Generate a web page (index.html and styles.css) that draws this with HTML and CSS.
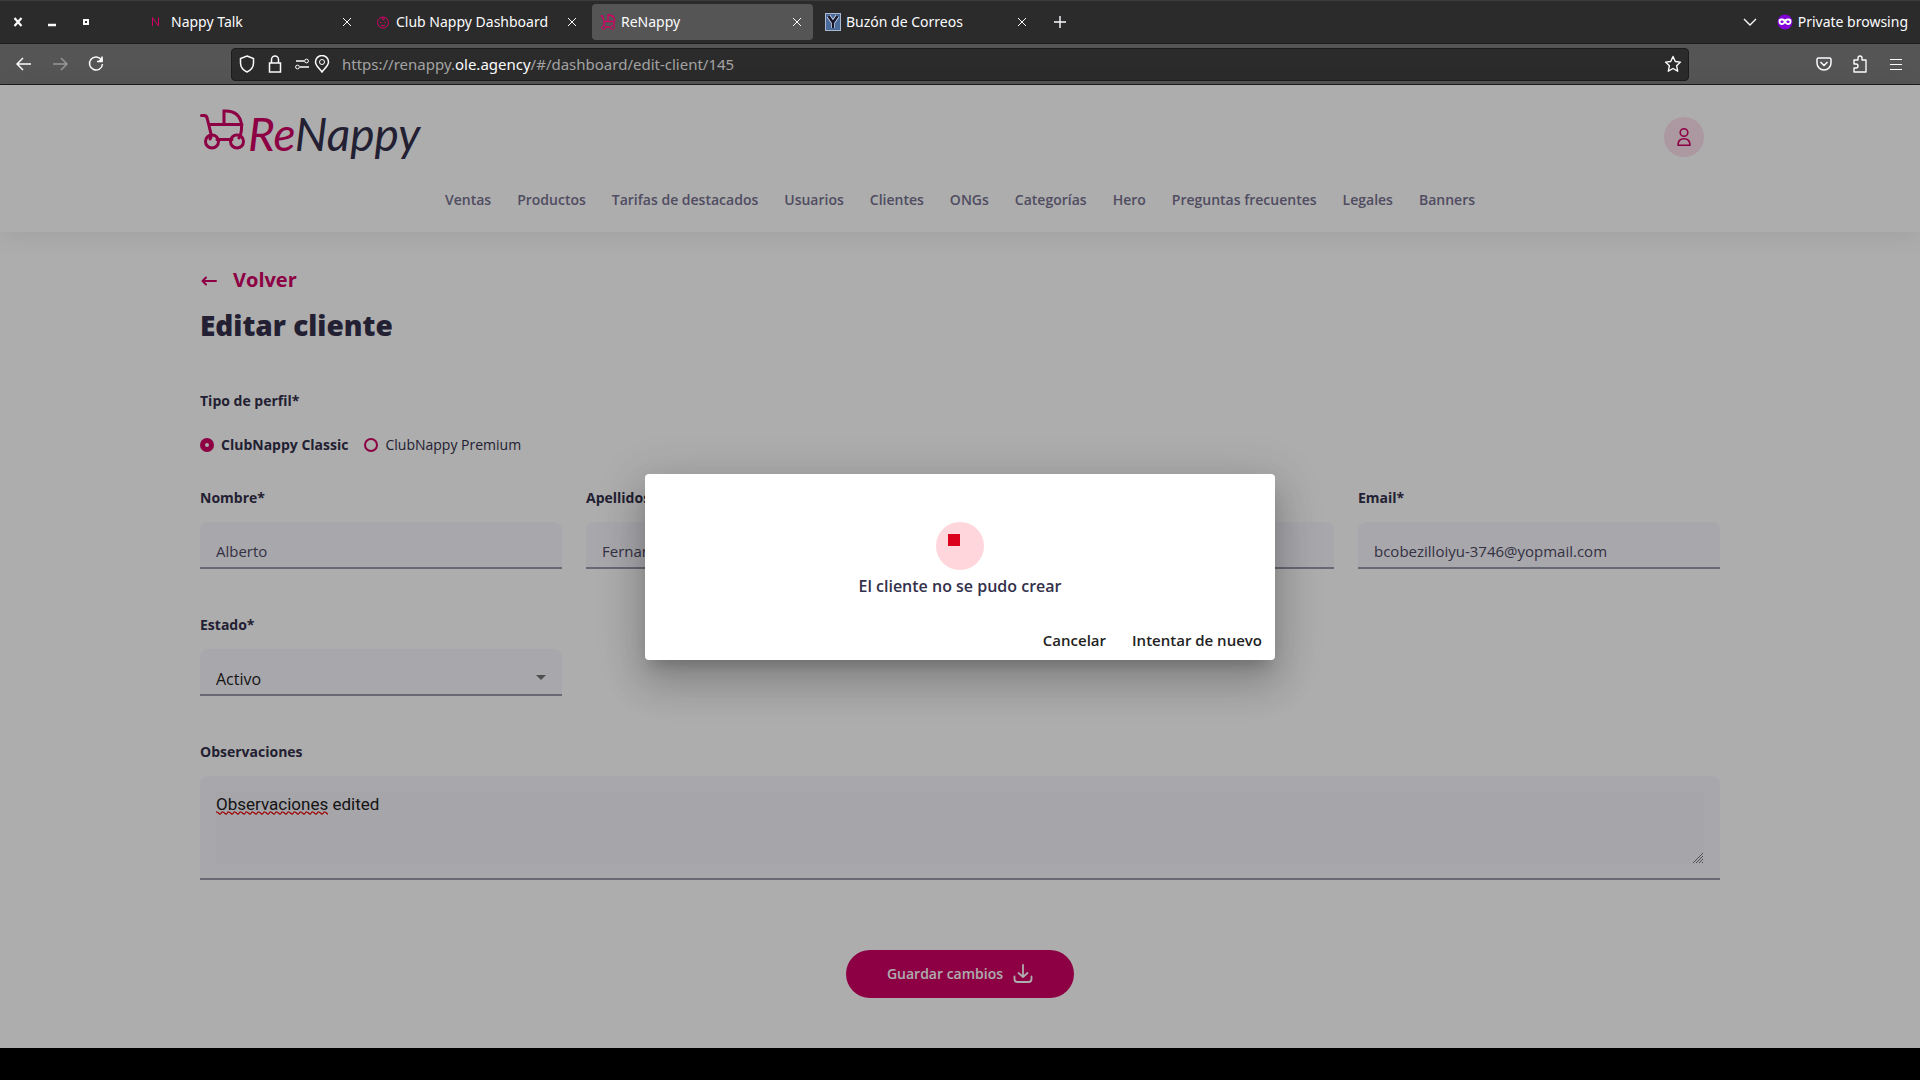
FILE: index.html
```html
<!DOCTYPE html>
<html lang="es">
<head>
    <meta charset="UTF-8">
    <meta name="viewport" content="width=device-width, initial-scale=1.0">
    <title>ReNappy</title>
    <link rel="stylesheet" href="styles.css">
</head>
<body>
    <div class="browser">
        <div class="tab-bar">
            <div class="window-buttons">
                <button class="icon-button" aria-label="Close window"><svg width="10" height="10" viewBox="0 0 10 10"><path d="M1.500 1l7 8M8.500 1l-7 8" stroke-width="2.200"/></svg></button>
                <button class="icon-button" aria-label="Minimize"><svg width="10" height="10" viewBox="0 0 10 10"><path d="M1 8h8" stroke-width="2.500"/></svg></button>
                <button class="icon-button" aria-label="Maximize"><svg width="10" height="10" viewBox="0 0 10 10"><path d="M3 3h4v4H3z" stroke-width="2"/></svg></button>
            </div>
            <div class="tabs">
                <div class="tab">
                    <svg class="favicon pink" width="16" height="16" viewBox="0 0 16 16"><path d="M2.500 12V3.500l6 8.500V3.500"/></svg>
                    <span class="tab-title">Nappy Talk</span>
                    <button class="icon-button" aria-label="Close tab"><svg width="8" height="8" viewBox="0 0 8 8"><path d="M0 0l8 8M8 0L0 8"/></svg></button>
                </div>
                <div class="tab">
                    <svg class="favicon pink" width="16" height="16" viewBox="0 0 16 16"><circle cx="8" cy="8.500" r="5.500"/><path d="M5 8.500h1.500M9.500 8.500H11M6 11q2 1.500 4 0M8 3q-2 2 0 3q2 0 1-2"/></svg>
                    <span class="tab-title">Club Nappy Dashboard</span>
                    <button class="icon-button" aria-label="Close tab"><svg width="8" height="8" viewBox="0 0 8 8"><path d="M0 0l8 8M8 0L0 8"/></svg></button>
                </div>
                <div class="tab active">
                    <svg class="favicon pink" width="16" height="16" viewBox="0 0 16 16"><path d="M.5 2h2L4 7.500V12M4 7.500h10.500M8 7V1q5.500 0 6.500 4v2M14 7v5M5.500 13h5" stroke-width="1.300"/><circle cx="3.500" cy="13.500" r="1.900"/><circle cx="12.500" cy="13.500" r="1.900"/></svg>
                    <span class="tab-title">ReNappy</span>
                    <button class="icon-button" aria-label="Close tab"><svg width="8" height="8" viewBox="0 0 8 8"><path d="M0 0l8 8M8 0L0 8"/></svg></button>
                </div>
                <div class="tab">
                    <svg class="favicon" width="16" height="18" viewBox="0 0 16 18"><rect x=".5" y=".5" width="15" height="17" fill="#4a6a9c" stroke="#a9b8cf"/><path d="M3.500 3l4.500 6.500L12.500 3M8 9v6" stroke="#dfe6f0" stroke-width="4"/><path d="M3.500 3l4.500 6.500L12.500 3M8 9v6" stroke="#15152c" stroke-width="2.500"/></svg>
                    <span class="tab-title">Buzón de Correos</span>
                    <button class="icon-button" aria-label="Close tab"><svg width="8" height="8" viewBox="0 0 8 8"><path d="M0 0l8 8M8 0L0 8"/></svg></button>
                </div>
            </div>
            <button class="icon-button new-tab" aria-label="New tab"><svg width="12" height="12" viewBox="0 0 12 12"><path d="M6 0v12M0 6h12" stroke-width="1.400"/></svg></button>
            <div class="private">
                <button class="icon-button" aria-label="List all tabs"><svg width="14" height="8" viewBox="0 0 14 8"><path d="M1 1l6 6 6-6" stroke-width="1.400"/></svg></button>
                <svg class="mask" width="16" height="16" viewBox="0 0 16 16"><circle cx="8" cy="8" r="7.500" fill="#8000d7"/><path d="M1.500 7q0-3 3.500-2.500 2 .2 3 1 1-.8 3-1 3.500-.5 3.500 2.500 0 4-3.500 4-1.800 0-3-1.700Q6.800 11 5 11 1.500 11 1.500 7z" fill="#fff"/><ellipse cx="5" cy="7.800" rx="1.600" ry="1.200" fill="#8000d7"/><ellipse cx="11" cy="7.800" rx="1.600" ry="1.200" fill="#8000d7"/></svg>
                <span>Private browsing</span>
            </div>
        </div>
        <div class="toolbar">
            <div class="toolbar-side">
                <button class="icon-button" aria-label="Back"><svg width="16" height="16" viewBox="0 0 16 16"><path d="M15 8H1.500M7 2L1 8l6 6" stroke-width="1.500"/></svg></button>
                <button class="icon-button dim" aria-label="Forward"><svg width="16" height="16" viewBox="0 0 16 16"><path d="M1 8h13.500M9 2l6 6-6 6" stroke-width="1.500"/></svg></button>
                <button class="icon-button" aria-label="Reload"><svg width="16" height="16" viewBox="0 0 16 16"><path d="M13.500 4A6.500 6.500 0 1 0 14.500 8M14 .5v5H9" stroke-width="1.500"/><path d="M14.500 1v5h-5z" fill="#fbfbfe" stroke="none"/></svg></button>
            </div>
            <div class="url-bar">
                <svg width="16" height="18" viewBox="0 0 16 18"><path d="M8 1l6.500 2.500V8c0 4-2.500 7-6.500 9C4 15 1.500 12 1.500 8V3.500z" stroke-width="1.500"/></svg>
                <svg width="16" height="18" viewBox="0 0 16 18"><path d="M2.500 8h11v9h-11zM4.500 8V4.500a3.500 3.500 0 0 1 7 0V8" stroke-width="1.500"/></svg>
                <div class="site-icons">
                    <svg width="14" height="12" viewBox="0 0 14 12"><path d="M1 3h8M5 9h9" stroke-width="1.400"/><circle cx="11.500" cy="3" r="1.900"/><circle cx="2.500" cy="9" r="1.900"/></svg>
                    <svg width="16" height="18" viewBox="0 0 16 18"><path d="M8 17C5 13 1.500 10.500 1.500 7a6.500 6.500 0 0 1 13 0c0 3.500-3.500 6-6.500 10z" stroke-width="1.500"/><circle cx="8" cy="7" r="2.500"/></svg>
                </div>
                <span class="url">https://renappy.<b>ole.agency</b>/#/dashboard/edit-client/145</span>
                <button class="icon-button" aria-label="Bookmark"><svg width="18" height="18" viewBox="0 0 18 18"><path d="M9 1.500l2.300 5 5.200.6-3.900 3.600 1.100 5.500L9 13.500l-4.700 2.700 1.100-5.500L1.500 7.100l5.200-.6z" stroke-width="1.400" stroke-linejoin="round"/></svg></button>
            </div>
            <div class="toolbar-side end">
                <button class="icon-button" aria-label="Save to Pocket"><svg width="16" height="16" viewBox="0 0 16 16"><path d="M2.500 2h11q1.500 0 1.500 1.500V7a7 7 0 0 1-14 0V3.500Q1 2 2.500 2zM4.500 6L8 9.500 11.500 6" stroke-width="1.500"/></svg></button>
                <button class="icon-button" aria-label="Extensions"><svg width="16" height="18" viewBox="0 0 16 18"><path d="M2 5h4V3a2 2 0 0 1 4 0v2h4v12H2v-4h2a2 2 0 0 0 0-4H2z" stroke-width="1.400" stroke-linejoin="round"/></svg></button>
                <button class="icon-button" aria-label="Menu"><svg width="14" height="12" viewBox="0 0 14 12"><path d="M1 1.500h12M1 6.500h12M1 11.500h12" stroke-width="1.200"/></svg></button>
            </div>
        </div>
    </div>

    <div class="page">
        <header class="header">
            <div class="container header-top">
                <a class="logo" href="#" aria-label="ReNappy">
                    <svg width="48" height="44" viewBox="0 0 48 44"><path d="M1.500 6.500H4q3 0 3.500 4L11 25q.5 3-1 5M9.500 15.500h32.500M24 15V2q15-1 17.500 13 .5 9-2.500 14M17 30.500h15"/><circle cx="12" cy="32.500" r="6.500"/><circle cx="37" cy="32.500" r="6.500"/></svg>
                    <span class="logo-text"><span class="logo-re">Re</span>Nappy</span>
                </a>
                <button class="avatar" aria-label="Mi cuenta"><svg width="16" height="20" viewBox="0 0 16 20"><circle cx="8" cy="5.500" r="3.800"/><path d="M2 18.200q0-6.500 6-6.500t6 6.500z" stroke-linejoin="round"/></svg></button>
            </div>
            <nav class="nav">
                <a href="#">Ventas</a>
                <a href="#">Productos</a>
                <a href="#">Tarifas de destacados</a>
                <a href="#">Usuarios</a>
                <a href="#">Clientes</a>
                <a href="#">ONGs</a>
                <a href="#">Categorías</a>
                <a href="#">Hero</a>
                <a href="#">Preguntas frecuentes</a>
                <a href="#">Legales</a>
                <a href="#">Banners</a>
            </nav>
        </header>

        <main class="container main">
            <a class="back" href="#"><svg width="18" height="14" viewBox="0 0 18 14"><path d="M16 8H2.500M6 4.500L2.500 8 6 11.500"/></svg>Volver</a>
            <h1>Editar cliente</h1>

            <form class="form">
                <fieldset class="profile">
                    <legend>Tipo de perfil*</legend>
                    <div class="radios">
                        <label class="radio"><input type="radio" name="perfil" checked><span>ClubNappy Classic</span></label>
                        <label class="radio"><input type="radio" name="perfil"><span>ClubNappy Premium</span></label>
                    </div>
                </fieldset>

                <div class="fields">
                    <div class="field">
                        <label for="nombre">Nombre*</label>
                        <input type="text" id="nombre" value="Alberto">
                    </div>
                    <div class="field">
                        <label for="apellidos">Apellidos*</label>
                        <input type="text" id="apellidos" value="Fernandez">
                    </div>
                    <div class="field">
                        <label for="telefono">Teléfono*</label>
                        <input type="tel" id="telefono">
                    </div>
                    <div class="field">
                        <label for="email">Email*</label>
                        <input type="email" id="email" value="bcobezilloiyu-3746@yopmail.com">
                    </div>
                    <div class="field">
                        <label for="estado">Estado*</label>
                        <div class="select">
                            <select id="estado"><option>Activo</option><option>Inactivo</option></select>
                            <svg class="caret" width="10" height="5" viewBox="0 0 10 5"><path d="M0 0h10L5 5z"/></svg>
                        </div>
                    </div>
                </div>

                <div class="field">
                    <label for="observaciones">Observaciones</label>
                    <div class="textarea">
                        <textarea id="observaciones" spellcheck="false">Observaciones edited</textarea>
                        <svg class="misspelled" width="112" height="4"><defs><pattern id="wave" width="6" height="4" patternUnits="userSpaceOnUse"><path d="M0 .8Q1.500.8 3 2.500T6 .8"/></pattern></defs><rect width="112" height="4" fill="url(#wave)"/></svg>
                        <svg class="grip" width="12" height="12" viewBox="0 0 12 12"><path d="M1 11L11 1M4 11l7-7M7 11l4-4M10 11l1-1"/></svg>
                    </div>
                </div>

                <button class="save" type="button">Guardar cambios<svg width="20" height="20" viewBox="0 0 20 20"><path d="M10 1v12M5.500 9l4.500 4 4.500-4M1.500 12.500V15q0 3 3 3h11q3 0 3-3v-2.500"/></svg></button>
            </form>
        </main>

        <div class="overlay">
            <div class="dialog" role="dialog" aria-modal="true" aria-labelledby="dialog-message">
                <div class="dialog-icon"><span></span></div>
                <p id="dialog-message">El cliente no se pudo crear</p>
                <div class="dialog-actions">
                    <button>Cancelar</button>
                    <button>Intentar de nuevo</button>
                </div>
            </div>
        </div>
    </div>
</body>
</html>
```

FILE: styles.css
```css
* {
    box-sizing: border-box;
}

body {
    margin: 0;
    min-height: 100vh;
    padding-bottom: 32px;
    display: flex;
    flex-direction: column;
    background: #000;
    color: #33304b;
    font-family: "Open Sans", sans-serif;
    font-size: 14px;
    line-height: 20px;
}

button, input, select, textarea {
    font: inherit;
    color: inherit;
}

button {
    padding: 0;
    border: none;
    background: none;
    cursor: pointer;
}

a {
    color: inherit;
    text-decoration: none;
}

svg {
    display: block;
    flex: none;
    fill: none;
    stroke: currentColor;
}

/* browser window */
.browser {
    color: #fbfbfe;
    font-family: "Noto Sans", sans-serif;
    font-size: 14px;
}

.tab-bar {
    display: flex;
    align-items: center;
    height: 44px;
    padding-right: 12px;
    background: #2b2b2b;
    border-top: 1px solid #3c3c3c;
    border-bottom: 1px solid #1c1c1c;
}

.icon-button {
    display: flex;
    align-items: center;
    justify-content: center;
    width: 16px;
    height: 24px;
    flex: none;
}

.window-buttons {
    display: flex;
    gap: 18px;
    padding: 0 48px 0 10px;
}

.tabs {
    display: flex;
    gap: 4px;
}

.tab {
    display: flex;
    align-items: center;
    gap: 5px;
    width: 221px;
    height: 36px;
    padding: 0 8px;
    border-radius: 4px;
}

.tab.active {
    background: #555;
}

.tab-title {
    flex: 1;
}

.pink {
    color: #d20065;
}

.new-tab {
    margin-left: 14px;
}

.private {
    display: flex;
    align-items: center;
    gap: 5px;
    margin-left: auto;
}

.private .icon-button {
    margin-right: 14px;
}

.mask {
    stroke: none;
}

.toolbar {
    display: flex;
    align-items: center;
    height: 41px;
    background: #555;
    border-bottom: 1px solid #1c1c1c;
}

.toolbar-side {
    display: flex;
    gap: 20px;
    width: 231px;
    padding: 0 16px;
}

.toolbar-side.end {
    justify-content: flex-end;
}

.dim {
    opacity: .4;
}

.url-bar {
    display: flex;
    align-items: center;
    gap: 12px;
    flex: 1;
    height: 33px;
    padding: 0 7px;
    background: #2b2b2b;
    border: 1px solid #1c1c1c;
    border-radius: 4px;
}

.site-icons {
    display: flex;
    align-items: center;
    gap: 5px;
}

.url {
    flex: 1;
    color: #a3a3a3;
    font-size: 15px;
}

.url b {
    color: #fbfbfe;
    font-weight: normal;
}

/* page */
.page {
    position: relative;
    flex: 1;
    background: #fff;
}

.container {
    width: 100%;
    max-width: 1568px;
    margin: 0 auto;
    padding: 0 24px;
}

.header {
    padding: 24px 0 22px;
    box-shadow: 0 4px 24px rgba(0, 0, 0, .08);
}

.header-top {
    display: flex;
    align-items: center;
    justify-content: space-between;
    height: 56px;
}

.logo {
    display: flex;
    align-items: flex-start;
    height: 56px;
}

.logo svg {
    color: #d20065;
    stroke-width: 3;
    stroke-linecap: round;
}

.logo-text {
    font-family: Lato, sans-serif;
    font-size: 46px;
    font-style: italic;
    line-height: 50px;
}

.logo-re {
    color: #d20065;
}

.avatar {
    display: flex;
    align-items: center;
    justify-content: center;
    width: 40px;
    height: 40px;
    margin-right: 16px;
    border-radius: 50%;
    background: #fde0ed;
    color: #d20065;
}

.avatar svg {
    stroke-width: 1.6;
}

.nav {
    display: flex;
    flex-wrap: wrap;
    justify-content: center;
    gap: 26px;
    margin-top: 25px;
    color: #76718f;
    font-weight: 600;
}

.main {
    padding-top: 34px;
    padding-bottom: 40px;
}

.back {
    display: inline-flex;
    align-items: center;
    gap: 15px;
    color: #d20065;
    font-size: 20px;
    font-weight: 700;
    line-height: 28px;
}

.back svg {
    stroke-width: 2;
    stroke-linecap: round;
    stroke-linejoin: round;
}

h1 {
    margin: 13px 0 48px;
    font-size: 28px;
    font-weight: 800;
    line-height: 36px;
}

.form {
    display: flex;
    flex-direction: column;
}

.profile {
    margin: 0 0 33px;
    padding: 0;
    border: none;
}

legend {
    padding: 0;
    font-weight: 700;
}

.radios {
    display: flex;
    gap: 16px;
    padding-top: 24px;
}

.radio {
    display: flex;
    align-items: center;
    gap: 7px;
}

.radio input {
    appearance: none;
    width: 14px;
    height: 14px;
    margin: 0;
    border: 2px solid #d20065;
    border-radius: 50%;
}

.radio input:checked {
    border-width: 5px;
}

.radio input:checked + span {
    font-weight: 700;
}

.fields {
    display: grid;
    grid-template-columns: repeat(4, 1fr);
    gap: 46px 24px;
    margin-bottom: 46px;
}

.field label {
    display: block;
    margin-bottom: 14px;
    font-weight: 700;
}

.field input, .field select, .textarea {
    display: block;
    width: 100%;
    height: 47px;
    padding: 18px 16px 6px;
    border: none;
    border-bottom: 2px solid #9a98ac;
    border-radius: 8px 8px 0 0;
    background: #f8f7fe;
    outline: none;
}

.field input {
    color: #4c4963;
    font-size: 15px;
}

.select {
    position: relative;
}

.field select {
    appearance: none;
    padding-bottom: 4px;
    color: #222;
    font-size: 16px;
}

.caret {
    position: absolute;
    right: 16px;
    top: 26px;
    fill: #757575;
    stroke: none;
}

.field .textarea {
    position: relative;
    height: auto;
    padding: 16px 16px 14px;
}

textarea {
    display: block;
    width: 100%;
    height: 72px;
    padding: 0;
    border: none;
    outline: none;
    resize: none;
    background: #f5f4fb;
    color: #212121;
    font-family: Roboto, sans-serif;
    font-size: 17px;
    line-height: 24px;
}

.misspelled {
    position: absolute;
    left: 16px;
    top: 35px;
    stroke: none;
}

.misspelled path {
    stroke: #e60000;
    stroke-width: 1.2;
}

.grip {
    position: absolute;
    right: 16px;
    bottom: 14px;
    color: #777;
}

.save {
    display: flex;
    align-items: center;
    justify-content: center;
    gap: 10px;
    align-self: center;
    width: 228px;
    height: 48px;
    margin-top: 70px;
    border-radius: 24px;
    background: #d20065;
    color: #fff;
    font-weight: 600;
}

.save svg {
    stroke-width: 1.8;
    stroke-linecap: round;
    stroke-linejoin: round;
}

/* dialog */
.overlay {
    position: absolute;
    inset: 0;
    display: flex;
    align-items: center;
    justify-content: center;
    background: rgba(0, 0, 0, .32);
}

.dialog {
    display: flex;
    flex-direction: column;
    align-items: center;
    width: 630px;
    max-width: 80vw;
    padding: 48px 13px 8px;
    border-radius: 4px;
    background: #fff;
    box-shadow: 0 11px 15px -7px rgba(0, 0, 0, .2), 0 24px 38px 3px rgba(0, 0, 0, .14), 0 9px 46px 8px rgba(0, 0, 0, .12);
}

.dialog-icon {
    width: 48px;
    height: 48px;
    padding: 12px;
    border-radius: 50%;
    background: #ffd6dc;
}

.dialog-icon span {
    display: block;
    width: 12px;
    height: 12px;
    background: #db001b;
}

.dialog p {
    margin: 4px 0 30px;
    font-size: 16px;
    font-weight: 600;
    line-height: 24px;
}

.dialog-actions {
    display: flex;
    gap: 26px;
    align-self: flex-end;
    color: #222;
    font-size: 15px;
    font-weight: 600;
    line-height: 24px;
}
```
